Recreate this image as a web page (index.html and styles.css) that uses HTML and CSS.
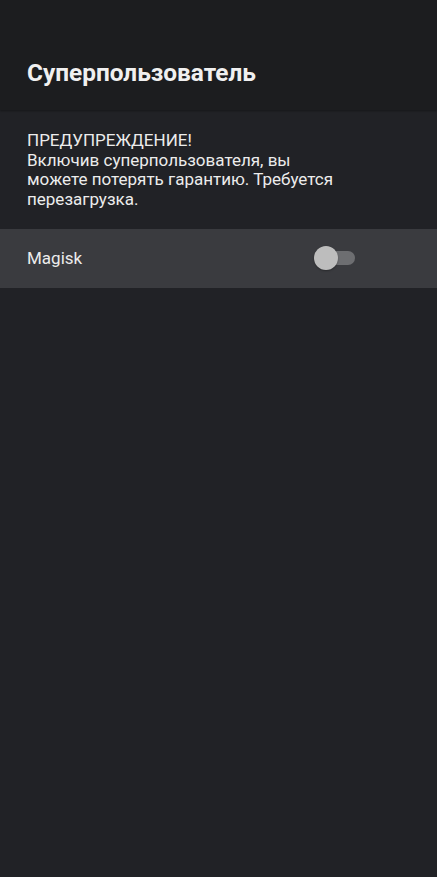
FILE: index.html
```html
<!DOCTYPE html>
<html lang="ru">
<head>
<meta charset="utf-8">
<link rel="stylesheet" href="styles.css">
</head>
<body>
<header class="appbar">
  <h1 class="title">Суперпользователь</h1>
</header>
<main class="content">
  <p class="warning">ПРЕДУПРЕЖДЕНИЕ!<br>Включив суперпользователя, вы<br>можете потерять гарантию. Требуется<br>перезагрузка.</p>
  <div class="row">
    <span class="label">Magisk</span>
    <span class="switch"><span class="track"></span><span class="thumb"></span></span>
  </div>
</main>
</body>
</html>
```
FILE: styles.css
```css
html, body {
  margin: 0;
  padding: 0;
  height: 100%;
}
body {
  background: #212226;
  font-family: Roboto, "Noto Sans", sans-serif;
  color: #ebebeb;
  display: flex;
  flex-direction: column;
}
.appbar {
  background: #1c1d1f;
  height: 110px;
  display: flex;
  align-items: flex-end;
  padding: 0 27px;
  box-sizing: border-box;
  box-shadow: 0 1px 2px rgba(0,0,0,0.35);
  position: relative;
  z-index: 1;
}
.title {
  margin: 0 0 22px;
  font-size: 24.4px;
  font-weight: 700;
  color: #f0f0f0;
  line-height: 30px;
}
.content {
  flex: 1;
}
.warning {
  margin: 0;
  padding: 21px 27px 19px;
  font-size: 17px;
  line-height: 19.7px;
  color: #ececec;
}
.row {
  background: #3a3b3f;
  height: 59px;
  display: flex;
  align-items: center;
  justify-content: space-between;
  padding: 0 82px 0 27px;
}
.label {
  font-size: 17px;
  color: #ececec;
}
.switch {
  position: relative;
  width: 42px;
  height: 24px;
  display: block;
}
.track {
  position: absolute;
  left: 8px;
  top: 5px;
  width: 34px;
  height: 14px;
  border-radius: 7px;
  background: #6d6e71;
}
.thumb {
  position: absolute;
  left: 1px;
  top: 0;
  width: 24px;
  height: 24px;
  border-radius: 50%;
  background: #bdbdbd;
  box-shadow: 0 1px 2px rgba(0,0,0,0.3);
}
```
